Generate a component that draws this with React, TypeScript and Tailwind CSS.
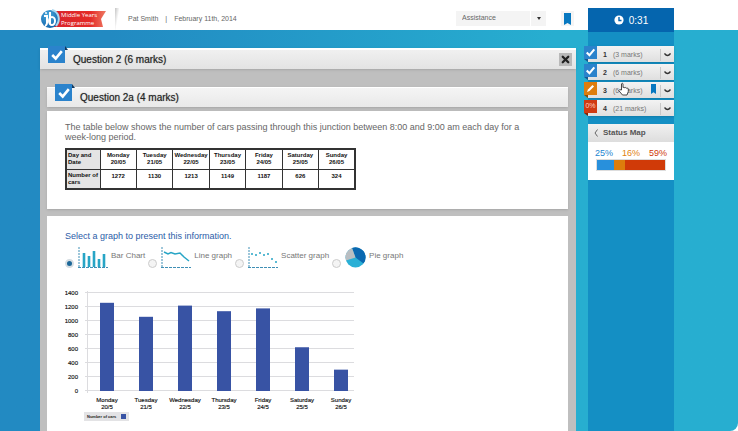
import { X } from 'lucide-react';

const cars = [
  { day: 'Monday', date: '20', table: 1272, plotted: 1260 },
  { day: 'Tuesday', date: '21', table: 1130, plotted: 1060 },
  { day: 'Wednesday', date: '22', table: 1213, plotted: 1220 },
  { day: 'Thursday', date: '23', table: 1149, plotted: 1140 },
  { day: 'Friday', date: '24', table: 1187, plotted: 1180 },
  { day: 'Saturday', date: '25', table: 626, plotted: 625 },
  { day: 'Sunday', date: '26', table: 324, plotted: 305 },
];

const questions = [
  { n: 1, marks: '(3 marks)', status: 'done', bookmarked: false },
  { n: 2, marks: '(6 marks)', status: 'done', bookmarked: false },
  { n: 3, marks: '(6 marks)', status: 'editing', bookmarked: true },
  { n: 4, marks: '(21 marks)', status: 'empty', bookmarked: false },
];

function Logo() {
  return (
    <svg width="67" height="20" viewBox="0 0 67 20" role="img" aria-label="IB Middle Years Programme">
      <defs>
        <linearGradient id="ribbon" x1="0" x2="1">
          <stop offset="0" stopColor="#d9242c" />
          <stop offset="0.7" stopColor="#e42a26" />
          <stop offset="1" stopColor="#ee7a63" />
        </linearGradient>
        <radialGradient id="globe" cx="0.4" cy="0.3" r="0.8">
          <stop offset="0" stopColor="#4aa9dc" />
          <stop offset="1" stopColor="#0c5ea8" />
        </radialGradient>
      </defs>
      <path d="M14 2 L66 2 L61 10 L63 18 L14 18 Z" fill="url(#ribbon)" />
      <circle cx="10" cy="10" r="9" fill="url(#globe)" />
      <path d="M12 1 C19 3 21 11 16 17" fill="none" stroke="#a8d6ef" strokeWidth="2" />
      <circle cx="6" cy="4" r="1" fill="#fff" />
      <path d="M4 7 H7 V14 Q7 16 5 17 M10 3 V15" fill="none" stroke="#fff" strokeWidth="2" />
      <ellipse cx="12" cy="12" rx="3" ry="4" fill="none" stroke="#fff" strokeWidth="2" />
      <g fill="#fff" fontSize="6" fontFamily="'Open Sans', sans-serif">
        <text x="21" y="8">Middle Years</text>
        <text x="21" y="16">Programme</text>
      </g>
    </svg>
  );
}

function Tick({ className }: { className: string }) {
  return (
    <svg viewBox="0 0 16 16" className={className} aria-hidden="true">
      <path d="M2.5 8 L6.5 12 L13.5 3.5" fill="none" stroke="#fff" strokeWidth="3" />
    </svg>
  );
}

function Bookmark({ className }: { className: string }) {
  return (
    <svg viewBox="0 0 8 12" preserveAspectRatio="none" className={className} aria-hidden="true">
      <path d="M0 0 H8 V12 L4 10 L0 12 Z" fill="#0878c0" />
    </svg>
  );
}

function TitleBadge() {
  return (
    <span className="absolute -top-1 left-2 flex">
      <span className="flex size-[17px] items-center justify-center bg-[#2b83cc]">
        <Tick className="size-[14px]" />
      </span>
      <svg width="3" height="4" viewBox="0 0 3 4" aria-hidden="true">
        <path d="M0 0 L3 4 H0 Z" fill="#12395e" />
      </svg>
    </span>
  );
}

function StatusBadge({ status }: { status: string }) {
  const tone =
    status === 'done' ? 'bg-[#2b83cc]' : status === 'editing' ? 'bg-[#dd7d0c]' : 'bg-[#d03a12]';
  const fold = status === 'done' ? '#17568e' : status === 'editing' ? '#8d4c00' : '#872000';
  return (
    <span className="absolute top-0 -left-1 block">
      <span className={'flex h-[13px] w-[13px] items-center justify-center text-[7px] text-[#ffd0c0] ' + tone}>
        {status === 'done' && <Tick className="size-[11px]" />}
        {status === 'editing' && (
          <svg width="9" height="9" viewBox="0 0 9 9" aria-hidden="true">
            <path d="M1 8 L2 5.5 L6.5 1 L8 2.5 L3.5 7 Z" fill="#fff" />
          </svg>
        )}
        {status === 'empty' && '0%'}
      </span>
      <svg width="4" height="3" viewBox="0 0 4 3" className="block" aria-hidden="true">
        <path d="M0 0 H4 V3 Z" fill={fold} />
      </svg>
    </span>
  );
}

const axes = (
  <g fill="none" stroke="#3f8fb5">
    <path d="M1 0 V21" strokeDasharray="2 1" />
    <path d="M0 20.5 H30" strokeDasharray="3 1" />
  </g>
);

function BarIcon() {
  return (
    <svg width="30" height="21" viewBox="0 0 30 21" aria-hidden="true">
      {axes}
      <path d="M6 6 V20 M11 9 V20 M16 4 V20 M21 12 V20 M26 7 V20" stroke="#27a5c6" strokeWidth="2.6" />
    </svg>
  );
}

function LineIcon() {
  return (
    <svg width="30" height="21" viewBox="0 0 30 21" aria-hidden="true">
      {axes}
      <path d="M3 5 L7 7 L10 5.5 L14 7 L19 6 L23 10 L28 14" fill="none" stroke="#27a5c6" strokeWidth="1.5" />
    </svg>
  );
}

function ScatterIcon() {
  return (
    <svg width="30" height="21" viewBox="0 0 30 21" aria-hidden="true">
      {axes}
      <path d="M3 7h2M7 8h2M11 6h2M15 8h2M19 7h2M23 12h2M27 15h2" stroke="#27a5c6" strokeWidth="1.5" />
    </svg>
  );
}

function PieIcon() {
  return (
    <svg width="21" height="21" viewBox="0 0 21 21" aria-hidden="true">
      <circle cx="10.5" cy="10.5" r="10" fill="#2ab0d6" />
      <path d="M10.5 10.5 L7 1 A10 10 0 0 1 18.5 16.5 Z" fill="#0a68b0" />
      <path d="M10.5 10.5 L7 1 A10 10 0 0 0 1 13.5 Z" fill="#b9bec2" />
    </svg>
  );
}

const graphs = [
  { id: 'bar', label: 'Bar Chart', icon: <BarIcon /> },
  { id: 'line', label: 'Line graph', icon: <LineIcon /> },
  { id: 'scatter', label: 'Scatter graph', icon: <ScatterIcon /> },
  { id: 'pie', label: 'Pie graph', icon: <PieIcon /> },
];

function CarsChart() {
  const ticks = [0, 200, 400, 600, 800, 1000, 1200, 1400];
  return (
    <svg width="292" height="134" viewBox="0 0 292 134" role="img" aria-label="Number of cars per day" className="block">
      <g fontFamily="'Liberation Sans', Arial, sans-serif" fontSize="6" fill="#111" stroke="#111" strokeWidth="0.15">
        {ticks.map((t) => (
          <text key={t} x="13" y={105 - (t / 200) * 14} textAnchor="end">{t}</text>
        ))}
        {cars.map((c, i) => (
          <g key={c.day} textAnchor="middle">
            <text x={42 + i * 39} y="114">{c.day}</text>
            <text x={42 + i * 39} y="121">{c.date}/5</text>
          </g>
        ))}
      </g>
      {ticks.map((t) => (
        <path key={t} d={`M20 ${102.5 - (t / 200) * 14} H289`} stroke="#dcdcdf" />
      ))}
      <path d="M22.5 3 V105" stroke="#dcdcdf" />
      {cars.map((c, i) => (
        <rect key={c.day} x={35 + i * 39} y={103 - c.plotted * 0.07} width="14" height={c.plotted * 0.07} fill="#3853a4" />
      ))}
      <rect x="19" y="124" width="45" height="9" fill="#e3e3e5" />
      <text x="22" y="130" fontSize="4" fontWeight="700" fill="#222" fontFamily="'Liberation Sans', Arial, sans-serif">Number of cars</text>
      <rect x="56" y="126" width="5" height="5" fill="#3853a4" />
    </svg>
  );
}

function Header() {
  return (
    <header className="flex h-[30px] items-end bg-white pr-16 pl-10">
      <div className="mb-px"><Logo /></div>
      <span className="ml-2 h-[22px] w-1 bg-linear-to-br from-[#c4c4c4] to-white to-60%" />
      <p className="mb-[6px] ml-[9px] flex gap-[7px] text-[7px] leading-[10px] whitespace-pre text-[#666]">
        <span>Pat Smith</span>
        <span>|</span>
        <span>February 11th, 2014</span>
      </p>
      <div className="relative mb-1 ml-auto flex h-[15px] w-[90px]">
        <select aria-label="Assistance" className="h-full w-full appearance-none bg-[#f4f4f4] pl-[6px] text-[7px] text-[#666]">
          <option>Assistance</option>
        </select>
        <span className="pointer-events-none absolute inset-y-0 right-0 flex w-4 items-center justify-center border-l border-white">
          <svg width="4" height="3" viewBox="0 0 4 3" aria-hidden="true"><path d="M0 0 H4 L2 3 Z" fill="#333" /></svg>
        </span>
      </div>
      <button aria-label="Bookmark" className="mr-[14px] mb-1 ml-[15px] flex h-[15px] w-[13px] items-center justify-center bg-[#f5f5f5]">
        <Bookmark className="h-3 w-[7px]" />
      </button>
      <div className="flex h-[22px] w-[86px] items-center justify-center gap-[5px] bg-[#0565ae] pt-[2px] text-[10px] text-white">
        <svg width="10" height="10" viewBox="0 0 10 10" aria-hidden="true">
          <circle cx="5" cy="5" r="4.6" fill="#fff" />
          <path d="M5 2 V5.5 H7.5" fill="none" stroke="#0565ae" strokeWidth="1.4" />
        </svg>
        <time>0:31</time>
      </div>
    </header>
  );
}

function Sidebar() {
  return (
    <aside className="w-[86px] shrink-0 border-t-2 border-[#0565ae] bg-[#148fc4] pt-[14px]">
      <nav className="relative flex flex-col gap-[2px]">
        {questions.map((q) => (
          <div key={q.n} className="relative flex h-4 items-center bg-linear-to-b from-[#f3f3f3] to-[#dfdfdf] pt-[2px] pl-[15px] text-[7px] shadow-sm">
            <StatusBadge status={q.status} />
            <a href="#question" className="flex flex-1 items-center gap-[6px] text-[#777]">
              <b className="text-[#333]">{q.n}</b>
              <span>{q.marks}</span>
            </a>
            {q.bookmarked && <Bookmark className="mr-[4px] mb-[4px] h-[10px] w-[5px]" />}
            <button aria-label={'Expand question ' + q.n} className="flex h-3 w-[14px] items-center justify-center border-l border-[#c8c8c8]">
              <svg width="7" height="4" viewBox="0 0 7 4" aria-hidden="true">
                <path d="M0.5 0.5 Q3.5 4.5 6.5 0.5" fill="none" stroke="#333" strokeWidth="1.3" />
              </svg>
            </button>
          </div>
        ))}
        <svg className="absolute top-9 left-[30px]" width="11" height="14" viewBox="0 0 11 14" aria-hidden="true">
          <path d="M3.5 8 V1.8 Q4.2 0.6 5 1.8 V5.5 Q6 4.7 6.8 5.8 Q7.8 5 8.6 6.2 Q10 5.6 10.3 7 V9.5 L9 13 H4.5 L0.8 8.6 Q1 7 3.5 8 Z" fill="#fff" stroke="#333" strokeWidth="0.9" />
        </svg>
      </nav>
      <section className="mt-2 bg-white pb-[9px]">
        <h2 className="flex h-[18px] items-center gap-[5px] bg-linear-to-b from-[#f1f1f1] to-[#dddddd] pl-[6px] text-[8px] font-bold text-[#555]">
          <svg width="4" height="8" viewBox="0 0 4 8" aria-hidden="true">
            <path d="M3.5 0.5 L1 4 L3.5 7.5" fill="none" stroke="#666" />
          </svg>
          Status Map
        </h2>
        <div className="mt-[6px] flex justify-between px-[7px] text-[9px] leading-[11px]">
          <span className="text-[#1c85d0]">25%</span>
          <span className="text-[#df8210]">16%</span>
          <span className="text-[#d03808]">59%</span>
        </div>
        <div className="mx-2 flex h-[12px] border border-[#ddd]">
          <span className="w-1/4 bg-[#2890dc]" />
          <span className="w-[16%] bg-[#dd7d0c]" />
          <span className="flex-1 bg-[#d03a08]" />
        </div>
      </section>
    </aside>
  );
}

export default function App() {
  return (
    <div className="flex min-h-screen flex-col overflow-hidden rounded-br-lg bg-linear-to-r from-[#228ac2] from-15% to-[#27aed0] to-75% font-['Liberation_Sans',Arial,sans-serif]">
      <Header />
      <div className="flex flex-1 pr-16 pl-10">
        <main className="mt-[18px] mr-3 flex min-w-0 flex-1 flex-col bg-[#bfbfbf]">
          <div className="relative flex h-[21px] items-center border-t-2 border-white bg-linear-to-b from-[#f0f0f0] to-[#e3e3e3] pr-1 pl-[33px] shadow">
            <TitleBadge />
            <h1 className="flex-1 text-[10px] leading-3 font-normal text-[#222] [text-shadow:0_0_1px_#2228]">Question 2 (6 marks)</h1>
            <button aria-label="Close" className="flex size-[13px] items-center justify-center bg-[#b9b9b9]">
              <X className="size-[11px] text-[#222]" strokeWidth={5} />
            </button>
          </div>
          <div className="flex flex-1 flex-col pt-[18px] pr-2 pl-[7px]">
            <div className="relative flex h-5 items-center border-t border-white bg-linear-to-b from-[#f4f4f4] to-[#e9e9e9] pl-[33px] shadow-sm">
              <TitleBadge />
              <h2 className="text-[10px] leading-3 font-normal text-[#222] [text-shadow:0_0_1px_#2228]">Question 2a (4 marks)</h2>
            </div>
            <section className="mt-1 bg-white px-[18px] pt-[11px] pb-[19px] shadow">
              <p className="max-w-[470px] text-[9px] leading-[10px] text-[#666]">
                The table below shows the number of cars passing through this junction between 8:00 and 9:00 am each day for a week-long period.
              </p>
              <table className="mt-[6px] w-[291px] table-fixed border-collapse border-2 border-[#333] text-[6px] leading-[7px] text-[#111]">
                <tbody>
                  <tr className="h-5">
                    <th className="w-[34px] border border-[#333] bg-[#e4e4e4] px-px py-0 text-left">Day and Date</th>
                    {cars.map((c) => (
                      <th key={c.day} className="border border-[#333] p-0">
                        {c.day}<br />{c.date}/05
                      </th>
                    ))}
                  </tr>
                  <tr className="h-5">
                    <th className="border border-[#333] bg-[#e4e4e4] px-px py-0 text-left whitespace-nowrap">Number of<br />cars</th>
                    {cars.map((c) => (
                      <td key={c.day} className="border border-[#333] p-0 pt-[3px] text-center align-top font-bold">{c.table}</td>
                    ))}
                  </tr>
                </tbody>
              </table>
            </section>
            <section className="mt-[7px] flex-1 bg-white px-[18px] pt-[15px] pb-2">
              <fieldset>
                <legend className="text-[9px] leading-[11px] text-[#2b5ca8]">Select a graph to present this information.</legend>
                <div className="mt-[5px] flex gap-[3px]">
                  {graphs.map((g) => (
                    <div key={g.id} className="flex items-start">
                      <input
                        type="radio"
                        name="graph"
                        id={g.id}
                        defaultChecked={g.id === 'bar'}
                        className="mt-[12px] mr-1 size-[9px] shrink-0 appearance-none rounded-full border border-[#ccc] bg-[#f4f4f4] checked:border-2 checked:border-[#d5dde2] checked:bg-[#1c6798]"
                      />
                      <label htmlFor={g.id} className="flex items-start gap-[3px] text-[8px] leading-[18px] whitespace-nowrap text-[#777]">
                        {g.icon}
                        {g.label}
                      </label>
                    </div>
                  ))}
                </div>
              </fieldset>
              <div className="mt-5"><CarsChart /></div>
            </section>
          </div>
        </main>
        <Sidebar />
      </div>
    </div>
  );
}
